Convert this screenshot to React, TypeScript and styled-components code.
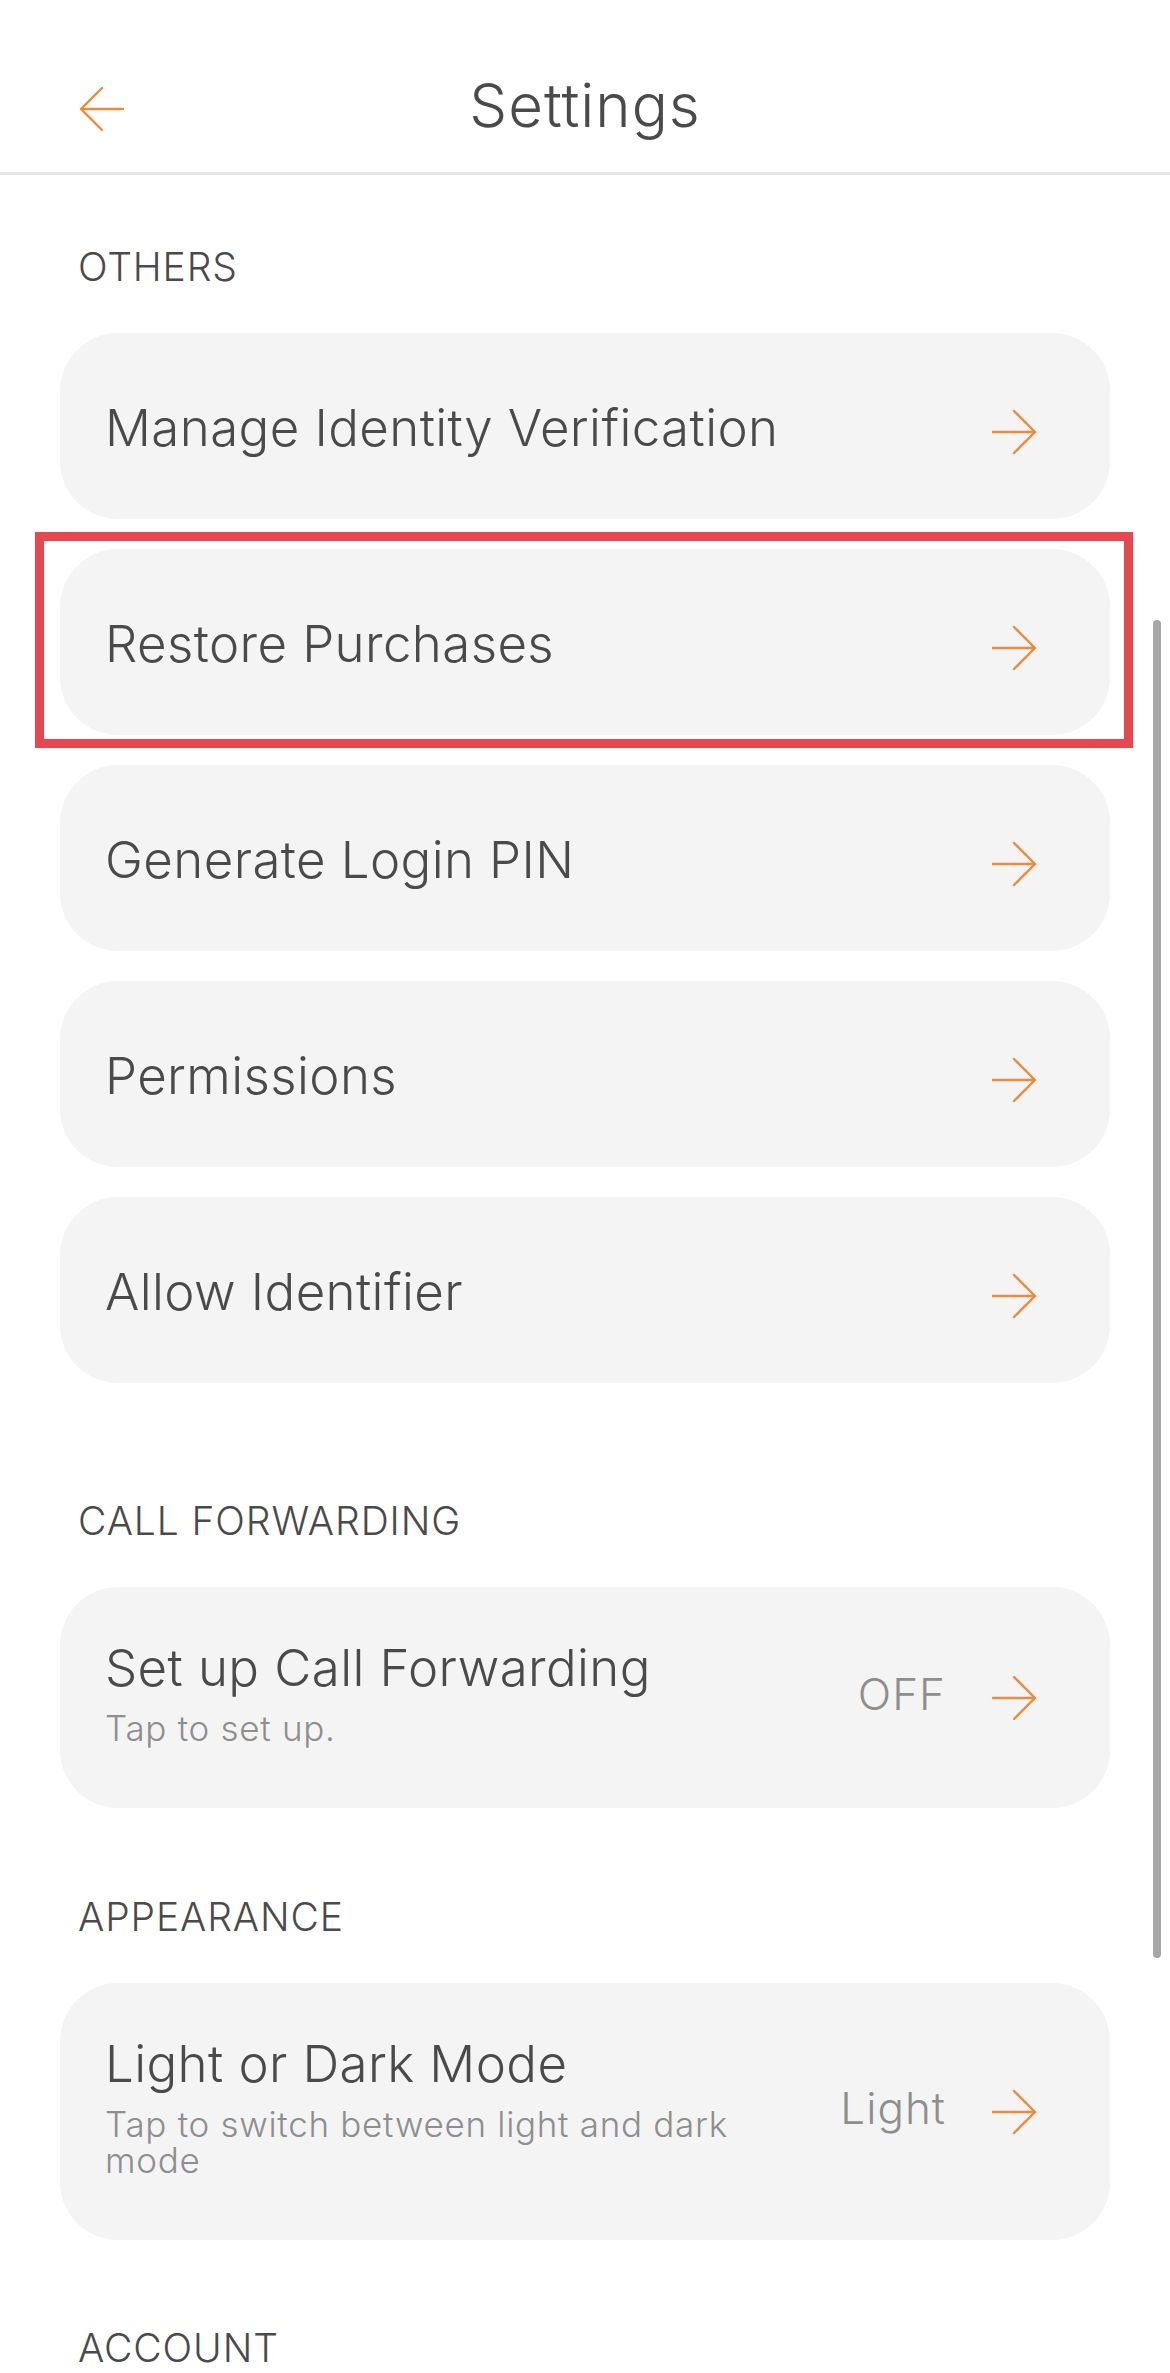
import React from 'react';
import styled, { createGlobalStyle } from 'styled-components';

const GlobalStyle = createGlobalStyle`
  html, body {
    margin: 0;
    padding: 0;
    background: #ffffff;
    overflow: hidden;
  }
  body {
    font-family: Inter, "Noto Sans", "Liberation Sans", sans-serif;
    color: #4a4a4a;
    -webkit-font-smoothing: antialiased;
  }
  *, *::before, *::after { box-sizing: border-box; }
`;

const ORANGE = '#ec8a3d';
const DARK = '#4a4a4a';
const MUTED = '#8e8e8e';

const Screen = styled.div`
  position: relative;
  width: 1170px;
  height: 2373px;
  overflow: hidden;
  background: #ffffff;
`;

const Header = styled.header`
  display: grid;
  grid-template-columns: 1fr auto 1fr;
  align-items: center;
  height: 175px;
  padding-top: 38px;
  border-bottom: 3px solid #e6e6e6;
`;

const BackButton = styled.button`
  justify-self: start;
  display: flex;
  align-items: center;
  justify-content: center;
  width: 46px;
  height: 46px;
  margin: 7px 0 0 79px;
  padding: 0;
  border: 0;
  background: transparent;
  cursor: pointer;
`;

const Title = styled.h1`
  margin: 0;
  font-size: 60px;
  line-height: 60px;
  font-weight: 300;
  color: ${DARK};
  letter-spacing: 1px;
`;

const Content = styled.main`
  display: flex;
  flex-direction: column;
  padding: 0 60px;
`;

const Section = styled.section<{ $top: number }>`
  display: flex;
  flex-direction: column;
  margin-top: ${(p) => p.$top}px;
`;

const SectionLabel = styled.h2`
  margin: 0 0 47px 18px;
  font-size: 39px;
  line-height: 39px;
  font-weight: 300;
  letter-spacing: 0.9px;
  color: ${DARK};
`;

const List = styled.div`
  display: flex;
  flex-direction: column;
  gap: 30px;
`;

const Card = styled.div<{ $detailed?: boolean }>`
  display: flex;
  align-items: center;
  min-height: 186px;
  padding: ${(p) => (p.$detailed ? '51px 73px 62px 45px' : '4px 73px 0 45px')};
  background: #f4f4f4;
  border-radius: 58px;
  cursor: pointer;
`;

const TextBlock = styled.div`
  flex: 1;
  min-width: 0;
  display: flex;
  flex-direction: column;
`;

const RowTitle = styled.div`
  font-size: 51px;
  line-height: 60px;
  font-weight: 300;
  letter-spacing: 0.4px;
  color: ${DARK};
`;

const RowSubtitle = styled.div`
  margin-top: 12px;
  font-size: 35px;
  line-height: 36px;
  font-weight: 300;
  letter-spacing: 0.7px;
  color: ${MUTED};
`;

const Value = styled.span`
  margin: 3px 45px 0 40px;
  font-size: 44px;
  line-height: 44px;
  font-weight: 300;
  letter-spacing: 1px;
  color: ${MUTED};
  white-space: nowrap;
`;

const ArrowBox = styled.span<{ $detailed?: boolean }>`
  display: flex;
  flex: none;
  width: 46px;
  height: 46px;
  margin-top: ${(p) => (p.$detailed ? '11px' : '8px')};
`;

const Highlight = styled.div`
  position: relative;
`;

const HighlightFrame = styled.div`
  position: absolute;
  top: -17px;
  right: -23px;
  bottom: -13px;
  left: -25px;
  border: 9px solid #e9474f;
  pointer-events: none;
`;

const Scrollbar = styled.div`
  position: absolute;
  top: 620px;
  right: 9px;
  width: 8px;
  height: 1338px;
  border-radius: 4px;
  background: #a6a6a6;
`;

const Arrow = ({ left = false }: { left?: boolean }) => (
  <svg
    width="46"
    height="46"
    viewBox="0 0 46 46"
    fill="none"
    stroke={ORANGE}
    strokeWidth="2.4"
    strokeLinecap="round"
    strokeLinejoin="round"
    style={left ? { transform: 'scaleX(-1)' } : undefined}
  >
    <path d="M2 23 H44 M23 2 L44 23 L23 44" />
  </svg>
);

type Row = { title: string; subtitle?: string; value?: string; highlighted?: boolean };

const SettingRow = ({ title, subtitle, value }: Row) => {
  const detailed = Boolean(subtitle);
  return (
    <Card $detailed={detailed}>
      <TextBlock>
        <RowTitle>{title}</RowTitle>
        {subtitle && <RowSubtitle>{subtitle}</RowSubtitle>}
      </TextBlock>
      {value && <Value>{value}</Value>}
      <ArrowBox $detailed={detailed}>
        <Arrow />
      </ArrowBox>
    </Card>
  );
};

const others: Row[] = [
  { title: 'Manage Identity Verification' },
  { title: 'Restore Purchases', highlighted: true },
  { title: 'Generate Login PIN' },
  { title: 'Permissions' },
  { title: 'Allow Identifier' },
];

export default function App() {
  return (
    <Screen>
      <GlobalStyle />
      <Header>
        <BackButton aria-label="Back">
          <Arrow left />
        </BackButton>
        <Title>Settings</Title>
        <span />
      </Header>
      <Content>
        <Section $top={72}>
          <SectionLabel>OTHERS</SectionLabel>
          <List>
            {others.map((row) =>
              row.highlighted ? (
                <Highlight key={row.title}>
                  <SettingRow {...row} />
                  <HighlightFrame />
                </Highlight>
              ) : (
                <SettingRow key={row.title} {...row} />
              )
            )}
          </List>
        </Section>
        <Section $top={118}>
          <SectionLabel>CALL FORWARDING</SectionLabel>
          <List>
            <SettingRow title="Set up Call Forwarding" subtitle="Tap to set up." value="OFF" />
          </List>
        </Section>
        <Section $top={89}>
          <SectionLabel>APPEARANCE</SectionLabel>
          <List>
            <SettingRow
              title="Light or Dark Mode"
              subtitle="Tap to switch between light and dark mode"
              value="Light"
            />
          </List>
        </Section>
        <Section $top={88}>
          <SectionLabel>ACCOUNT</SectionLabel>
        </Section>
      </Content>
      <Scrollbar />
    </Screen>
  );
}
